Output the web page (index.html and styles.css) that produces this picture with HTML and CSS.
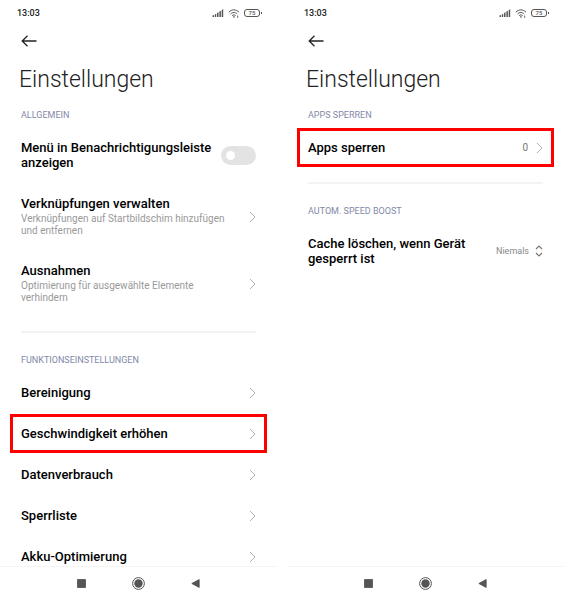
FILE: index.html
```html
<!DOCTYPE html>
<html lang="de">
<head>
<meta charset="utf-8">
<meta name="viewport" content="width=device-width, initial-scale=1">
<title>Einstellungen</title>
<link rel="stylesheet" href="styles.css">
</head>
<body>
<svg class="sprite" aria-hidden="true">
  <symbol id="chevron" viewBox="0 0 7 12"><path d="M1 1l5 5-5 5" fill="none" stroke="currentColor"/></symbol>
  <symbol id="back" viewBox="0 0 16 12"><path d="M6.500 .8L1.200 6l5.300 5.200M1.200 6H15.500" fill="none" stroke="currentColor" stroke-width="1.300"/></symbol>
  <symbol id="signal" viewBox="0 0 12 8"><path d="M.5 6.500V8H2V6.100zM2.800 5.500V8h1.400V4.700zM5 4.100V8h1.500V3.300zM7.400 2.600V8h1.500V1.800zM9.700 1.100V8h1.500V.2z" fill="currentColor"/></symbol>
  <symbol id="wifi" viewBox="0 0 12 9"><path d="M.8 3.200C3.700.1 8.100.1 11 3.200M2.500 5C4.400 3 7.400 3 9.300 5M4.100 6.700c1.100-1.100 2.500-1.100 3.600 0" fill="none" stroke="currentColor"/><circle cx="5.900" cy="7.900" r=".8" fill="currentColor"/><path d="M9.700 6.600v2.200" stroke="currentColor" stroke-width=".9"/></symbol>
  <symbol id="nav" viewBox="0 0 13 13"><circle cx="6.500" cy="6.500" r="5.900" fill="none" stroke="#444" stroke-width=".9"/><circle cx="6.500" cy="6.500" r="4.200" fill="#555"/></symbol>
</svg>
<div class="screens">
  <section class="phone">
    <div class="status">
      <span>13:03</span>
      <span class="status-icons">
        <svg class="signal"><use href="#signal"/></svg>
        <svg class="wifi"><use href="#wifi"/></svg>
        <span class="battery">75</span>
      </span>
    </div>
    <main class="content">
      <button class="back" aria-label="Zurück"><svg><use href="#back"/></svg></button>
      <h1>Einstellungen</h1>
      <h2>Allgemein</h2>
      <label class="row">
        <span class="title">Menü in Benachrichtigungsleiste anzeigen</span>
        <input class="switch" type="checkbox" role="switch">
      </label>
      <a class="row" href="#">
        <span class="text"><span class="title">Verknüpfungen verwalten</span><span class="sub">Verknüpfungen auf Startbildschim hinzufügen und entfernen</span></span>
        <svg class="chevron"><use href="#chevron"/></svg>
      </a>
      <a class="row" href="#">
        <span class="text"><span class="title">Ausnahmen</span><span class="sub">Optimierung für ausgewählte Elemente verhindern</span></span>
        <svg class="chevron"><use href="#chevron"/></svg>
      </a>
      <hr>
      <h2>Funktionseinstellungen</h2>
      <a class="row" href="#"><span class="title">Bereinigung</span><svg class="chevron"><use href="#chevron"/></svg></a>
      <a class="row marked" href="#"><span class="title">Geschwindigkeit erhöhen</span><svg class="chevron"><use href="#chevron"/></svg></a>
      <a class="row" href="#"><span class="title">Datenverbrauch</span><svg class="chevron"><use href="#chevron"/></svg></a>
      <a class="row" href="#"><span class="title">Sperrliste</span><svg class="chevron"><use href="#chevron"/></svg></a>
      <a class="row" href="#"><span class="title">Akku-Optimierung</span><svg class="chevron"><use href="#chevron"/></svg></a>
    </main>
    <nav class="navbar">
      <button aria-label="Letzte Apps"><svg viewBox="0 0 13 13"><path d="M2.500 2.500h8v8h-8z" fill="#555" stroke="#444" stroke-width=".7"/></svg></button>
      <button aria-label="Startseite"><svg><use href="#nav"/></svg></button>
      <button aria-label="Zurück"><svg viewBox="0 0 13 13"><path d="M2.800 6.500l7.400-4v8z" fill="#555" stroke="#444" stroke-width=".7"/></svg></button>
    </nav>
  </section>

  <section class="phone">
    <div class="status">
      <span>13:03</span>
      <span class="status-icons">
        <svg class="signal"><use href="#signal"/></svg>
        <svg class="wifi"><use href="#wifi"/></svg>
        <span class="battery">75</span>
      </span>
    </div>
    <main class="content">
      <button class="back" aria-label="Zurück"><svg><use href="#back"/></svg></button>
      <h1>Einstellungen</h1>
      <h2>Apps sperren</h2>
      <a class="row marked" href="#"><span class="title">Apps sperren</span><span class="value">0</span><svg class="chevron"><use href="#chevron"/></svg></a>
      <hr>
      <h2>Autom. Speed Boost</h2>
      <div class="row">
        <label class="title" for="cache">Cache löschen, wenn Gerät gesperrt ist</label>
        <span class="picker">
          <select id="cache"><option>Niemals</option></select>
          <svg viewBox="0 0 8 12"><path d="M1 4l3-3 3 3M1 8l3 3 3-3" fill="none" stroke="currentColor" stroke-width="1.200"/></svg>
        </span>
      </div>
    </main>
    <nav class="navbar">
      <button aria-label="Letzte Apps"><svg viewBox="0 0 13 13"><path d="M2.500 2.500h8v8h-8z" fill="#555" stroke="#444" stroke-width=".7"/></svg></button>
      <button aria-label="Startseite"><svg><use href="#nav"/></svg></button>
      <button aria-label="Zurück"><svg viewBox="0 0 13 13"><path d="M2.800 6.500l7.400-4v8z" fill="#555" stroke="#444" stroke-width=".7"/></svg></button>
    </nav>
  </section>
</div>
</body>
</html>
```
FILE: styles.css
```css
* { box-sizing: border-box; }
body { margin: 0; background: #fff; color: #000; font-family: Roboto, "Liberation Sans", sans-serif; }
svg { display: block; flex: none; }
button { padding: 0; border: 0; background: none; color: inherit; }
.sprite { position: absolute; width: 0; height: 0; }

.screens { display: grid; grid-template-columns: 1fr 1fr; gap: 10px; height: 100vh; }
.phone { display: flex; flex-direction: column; min-width: 0; min-height: 0; }

.status { display: flex; justify-content: space-between; align-items: center; height: 26px; padding: 0 17px; font-size: 9px; font-weight: 500; color: #222; }
.status-icons { display: flex; align-items: center; gap: 4px; color: #555; }
.signal { width: 12px; height: 8px; }
.wifi { width: 12px; height: 9px; }
.battery { position: relative; width: 16px; height: 8px; border: 1px solid #555; border-radius: 3px; font-size: 6px; line-height: 6px; text-align: center; }
.battery::after { content: ""; position: absolute; top: 2px; right: -3px; width: 1px; height: 2px; background: #555; }

.content { flex: 1; min-height: 0; overflow: hidden; padding: 0 21px; }
.back { display: block; margin: 9px 0 0; color: #222; }
.back svg { width: 16px; height: 12px; }
h1 { margin: 18px 0 15px -2px; font-size: 23px; line-height: 29px; font-weight: 300; color: #222; }
h2 { margin: 0 0 6px; font-size: 9px; line-height: 12px; font-weight: 400; text-transform: uppercase; color: #8288a8; }

.row { position: relative; display: flex; align-items: center; justify-content: space-between; padding: 13px 0; color: inherit; text-decoration: none; }
.title, .text { flex: 1; min-width: 0; }
.title { font-size: 13px; line-height: 15px; font-weight: 500; }
.text { display: flex; flex-direction: column; gap: 2px; padding-right: 20px; }
.sub { font-size: 10px; line-height: 12px; color: #999; }
.chevron { width: 7px; height: 12px; color: #b0b0b0; }
.value { margin-right: 8px; font-size: 10px; color: #777; }
.marked::after { content: ""; position: absolute; inset: 1px -11px; border: 3px solid #f00; }
hr { height: 2px; margin: 14px 0 21px; border: 0; background: #f3f3f3; }

.switch { appearance: none; flex: none; display: flex; align-items: center; width: 35px; height: 19px; margin: 0; padding: 0 5px; border-radius: 10px; background: #e3e3e3; }
.switch::before { content: ""; width: 9px; height: 9px; border-radius: 50%; background: #fff; }
.switch:checked { justify-content: flex-end; background: #3482ff; }

.picker { display: flex; align-items: center; gap: 5px; color: #777; }
.picker svg { width: 8px; height: 12px; }
select { appearance: none; padding: 0; border: 0; background: none; font: 9px Roboto, "Liberation Sans", sans-serif; color: #888; }

.navbar { display: flex; justify-content: center; align-items: center; gap: 44px; height: 34px; border-top: 1px solid #f4f4f4; }
.navbar svg { width: 13px; height: 13px; }
```
